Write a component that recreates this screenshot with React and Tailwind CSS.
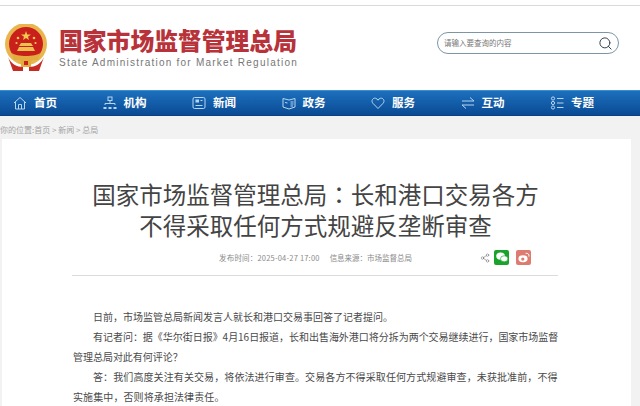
import React from 'react';
import { Search, Share2 } from 'lucide-react';

const cjk = '"Noto Sans CJK SC", sans-serif';

function NavIcon({ children }) {
  return (
    <svg width="14" height="14" viewBox="0 0 14 14" fill="none" stroke="#b5d6f2" strokeWidth="1" className="shrink-0">
      {children}
    </svg>
  );
}

const navigation = [
  {
    name: '首页',
    icon: (
      <>
        <path d="M1 7l6-5.5L13 7" />
        <path d="M2.5 6v7h9V6" />
        <path d="M5.5 13V8.5h3V13" />
      </>
    ),
  },
  {
    name: '机构',
    icon: (
      <>
        <rect x="5" y="1" width="4" height="3.5" />
        <path d="M7 4.5v3M2 9V7.5h10V9" />
        <path d="M0.5 11h3v2h-3zM5.5 11h3v2h-3zM10.5 11h3v2h-3z" fill="#b5d6f2" stroke="none" />
      </>
    ),
  },
  {
    name: '新闻',
    icon: (
      <>
        <rect x="1" y="1.5" width="12" height="11" rx="1.5" />
        <rect x="3.5" y="3.5" width="3.5" height="3" fill="#b5d6f2" stroke="none" />
        <path d="M3.5 9.5h7M8.5 4.5h2" />
      </>
    ),
  },
  {
    name: '政务',
    icon: (
      <>
        <path d="M1 2.5l6 1.5 6-1.5V11l-6 2-6-2z" />
        <path d="M8.5 6h3M8.5 8h3M8.5 10h2.5" />
        <path d="M3 6.5l2.5.5" />
      </>
    ),
  },
  {
    name: '服务',
    icon: <path d="M7 12.5L1.8 7.2C-.2 4.6 2 1.8 4.3 2.2 5.6 2.4 6.5 3.2 7 4.2 7.5 3.2 8.4 2.4 9.7 2.2 12 1.8 14.2 4.6 12.2 7.2z" />,
  },
  {
    name: '互动',
    icon: (
      <>
        <path d="M1 5h12M9 1.5L13 5" />
        <path d="M13 9H1M5 12.5L1 9" />
      </>
    ),
  },
  {
    name: '专题',
    icon: (
      <>
        <circle cx="3" cy="2.5" r="1.6" />
        <circle cx="3" cy="7" r="1.6" />
        <circle cx="3" cy="11.5" r="1.6" />
        <path d="M7 2.5h6.5M7 7h6.5M7 11.5h6.5" />
      </>
    ),
  },
];

function Emblem() {
  return (
    <svg width="44" height="48" viewBox="0 0 44 48" className="shrink-0">
      <circle cx="22" cy="20" r="21" fill="#e8b64c" />
      <circle cx="22" cy="20" r="17" fill="#c9201c" />
      <polygon points="22,7 23.2,10.5 27,10.5 24,12.7 25,16 22,14 19,16 20,12.7 17,10.5 20.8,10.5" fill="#f2c94c" />
      <circle cx="14" cy="14" r="1.3" fill="#f2c94c" />
      <circle cx="30" cy="14" r="1.3" fill="#f2c94c" />
      <circle cx="12.5" cy="19" r="1.1" fill="#f2c94c" />
      <circle cx="31.5" cy="19" r="1.1" fill="#f2c94c" />
      <path d="M13 27h18l-2-4H15zM15 22h14l-2-3H17z" fill="#eec04e" />
      <path d="M8 29c4 4 24 4 28 0l-2 7H10z" fill="#e2ad3e" />
      <path d="M4 33c3 7 9 10 15 10v4H9zM40 33c-3 7-9 10-15 10v4h10z" fill="#c62a22" />
      <rect x="17" y="35" width="10" height="8" fill="#e2ad3e" />
      <rect x="20" y="37" width="4" height="4" fill="#c9201c" />
    </svg>
  );
}

function WeChatIcon() {
  return (
    <svg width="12" height="11" viewBox="0 0 11 10">
      <ellipse cx="4.2" cy="3.7" rx="4" ry="3.3" fill="#fff" />
      <ellipse cx="7.5" cy="6.2" rx="3.4" ry="2.8" fill="#fff" stroke="#1aa32a" strokeWidth="0.6" />
    </svg>
  );
}

function WeiboIcon() {
  return (
    <svg width="12" height="11" viewBox="0 0 11 10">
      <ellipse cx="4.6" cy="6.2" rx="4.2" ry="3.2" fill="#fff" />
      <circle cx="4.4" cy="6.4" r="1.5" fill="#dd7b70" />
      <path d="M7 1.2c2-.5 3.6 1 3 3" stroke="#fff" strokeWidth="0.9" fill="none" />
    </svg>
  );
}

export default function App() {
  return (
    <div className="w-[640px] h-[406px] overflow-hidden bg-[#f2f2f2]" style={{ fontFamily: cjk }}>
      {/* Header */}
      <div className="h-[6px] bg-white border-b border-[#d9d9d9]" />
      <header className="h-[84px] bg-white flex items-center justify-between pl-[4px] pr-[21px]">
        <div className="flex items-center gap-[11px]">
          <Emblem />
          <div className="mt-[-1px]">
            <h1 className="text-[23.8px] leading-[28px] font-black text-[#b8323a] whitespace-nowrap">国家市场监督管理总局</h1>
            <p className="text-[10px] leading-[12px] mt-[3px] tracking-[1.23px] text-[#777] whitespace-nowrap" style={{ fontFamily: '"Liberation Sans", sans-serif' }}>
              State Administration for Market Regulation
            </p>
          </div>
        </div>
        <div className="w-[182px] h-[22px] mb-[10px] rounded-full border border-[#7d96a6] flex items-center justify-between pl-[6px] pr-[5px]">
          <span className="text-[7.5px] text-[#777]">请输入要查询的内容</span>
          <Search size={15} className="text-[#33444f]" strokeWidth={1.6} />
        </div>
      </header>

      {/* Nav */}
      <nav className="h-[26px] flex pl-[13px] bg-gradient-to-b from-[#1d70bd] to-[#0a4a94] border-t border-t-[#3a8fd0] border-b border-b-[#0a3f80]">
        {navigation.map((item) => (
          <div key={item.name} className="w-[89.5px] flex items-center gap-[7px] text-white">
            <NavIcon>{item.icon}</NavIcon>
            <span className="text-[11.5px] leading-none font-bold whitespace-nowrap">{item.name}</span>
          </div>
        ))}
      </nav>

      {/* Breadcrumb */}
      <div className="h-[23px] pt-[4px] flex items-center text-[8px] text-[#a3a3a3] whitespace-nowrap">
        你的位置:首页 &gt; 新闻 &gt; 总局
      </div>

      {/* Article */}
      <main className="ml-[2px] w-[629px] h-[267px] bg-white">
        <h2 className="pt-[40px] pr-[2px] text-center text-[23.5px] leading-[31px] text-[#444]">
          国家市场监督管理总局<span style={{ fontFamily: '"Noto Sans CJK TC", sans-serif' }}>：</span>长和港口交易各方<br />不得采取任何方式规避反垄断审查
        </h2>
        <div className="ml-[70px] mr-[73px] mt-[4px] h-[31px] pb-[4px] border-b border-[#dcdcdc] flex items-center pl-[147px]">
          <span className="text-[7.5px] tracking-[0.2px] text-[#8a8a8a] whitespace-nowrap">发布时间：2025-04-27 17:00</span>
          <span className="ml-[10px] text-[7.5px] text-[#8a8a8a] whitespace-nowrap">信息来源：市场监督总局</span>
          <Share2 size={10} strokeWidth={1.2} className="ml-[68px] text-[#666] shrink-0" />
          <span className="ml-[4px] mb-[2px] w-[15px] h-[15px] rounded-[2px] bg-[#1aa32a] flex items-center justify-center"><WeChatIcon /></span>
          <span className="ml-[7px] mb-[2px] w-[15px] h-[15px] rounded-[2px] bg-[#dd7b70] flex items-center justify-center"><WeiboIcon /></span>
        </div>
        <div className="ml-[71px] mt-[31px] w-[490px] text-[10px] leading-[20px] text-[#4a4a4a] whitespace-nowrap">
          <p className="indent-[20px]">日前，市场监管总局新闻发言人就长和港口交易事回答了记者提问。</p>
          <p className="indent-[20px] tracking-[-0.03px]">有记者问：据《华尔街日报》4月16日报道，长和出售海外港口将分拆为两个交易继续进行，国家市场监督<br />管理总局对此有何评论？</p>
          <p className="indent-[20px] tracking-[0.1px]">答：我们高度关注有关交易，将依法进行审查。交易各方不得采取任何方式规避审查，未获批准前，不得<br />实施集中，否则将承担法律责任。</p>
        </div>
      </main>
    </div>
  );
}
